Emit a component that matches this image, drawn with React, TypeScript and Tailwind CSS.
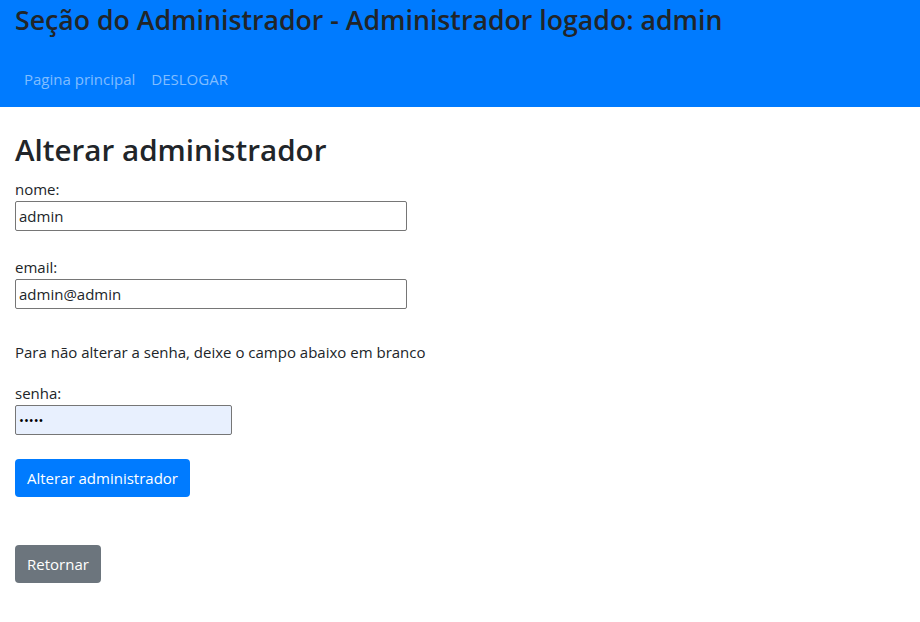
import { useState } from 'react'

export default function App() {
  const [nome, setNome] = useState('admin')
  const [email, setEmail] = useState('admin@admin')
  const [senha, setSenha] = useState('admin')

  return (
    <div className="min-h-screen bg-white text-[#212529] font-['Open_Sans',sans-serif] text-[15px]">
      {/* cabeçalho */}
      <header className="bg-[#007bff]">
        <h3 className="px-[15px] h-[40px] leading-[40px] text-[26.7px] font-semibold">
          Seção do Administrador - Administrador logado: admin
        </h3>
        <nav className="flex px-[16px] pt-[27px] pb-[16px]">
          <a href="#" className="px-2 leading-[24px] text-[#80bdff]">Pagina principal</a>
          <a href="#" className="px-2 leading-[24px] text-[#80bdff]">DESLOGAR</a>
        </nav>
      </header>

      <main className="px-[15px] pt-[24px]">
        <h2 className="text-[29.6px] font-semibold leading-[38px] mb-[8px]">Alterar administrador</h2>
        <form onSubmit={(e) => e.preventDefault()}>
          <label className="block leading-[24px]">nome:</label>
          <input
            className="block w-[392px] h-[30px] border border-[#767676] rounded-[2px] px-[3px] text-[15px] outline-none"
            value={nome}
            onChange={(e) => setNome(e.target.value)}
          />

          <label className="block leading-[24px] mt-[24px]">email:</label>
          <input
            className="block w-[392px] h-[30px] border border-[#767676] rounded-[2px] px-[3px] text-[15px] outline-none"
            value={email}
            onChange={(e) => setEmail(e.target.value)}
          />

          <p className="leading-[24px] mt-[31px] mb-[17px]">
            Para não alterar a senha, deixe o campo abaixo em branco
          </p>

          <label className="block leading-[24px]">senha:</label>
          <input
            type="password"
            className="block w-[217px] h-[30px] border border-[#767676] rounded-[2px] px-[3px] text-[13px] text-black bg-[#e8f0fe] outline-none"
            value={senha}
            onChange={(e) => setSenha(e.target.value)}
          />

          <button
            type="submit"
            className="mt-[24px] h-[38px] px-[12px] rounded-[4px] bg-[#007bff] text-white leading-[24px]"
          >
            Alterar administrador
          </button>
        </form>

        <button className="mt-[48px] h-[38px] px-[12px] rounded-[4px] bg-[#6c757d] text-white leading-[24px]">
          Retornar
        </button>
      </main>
    </div>
  )
}
